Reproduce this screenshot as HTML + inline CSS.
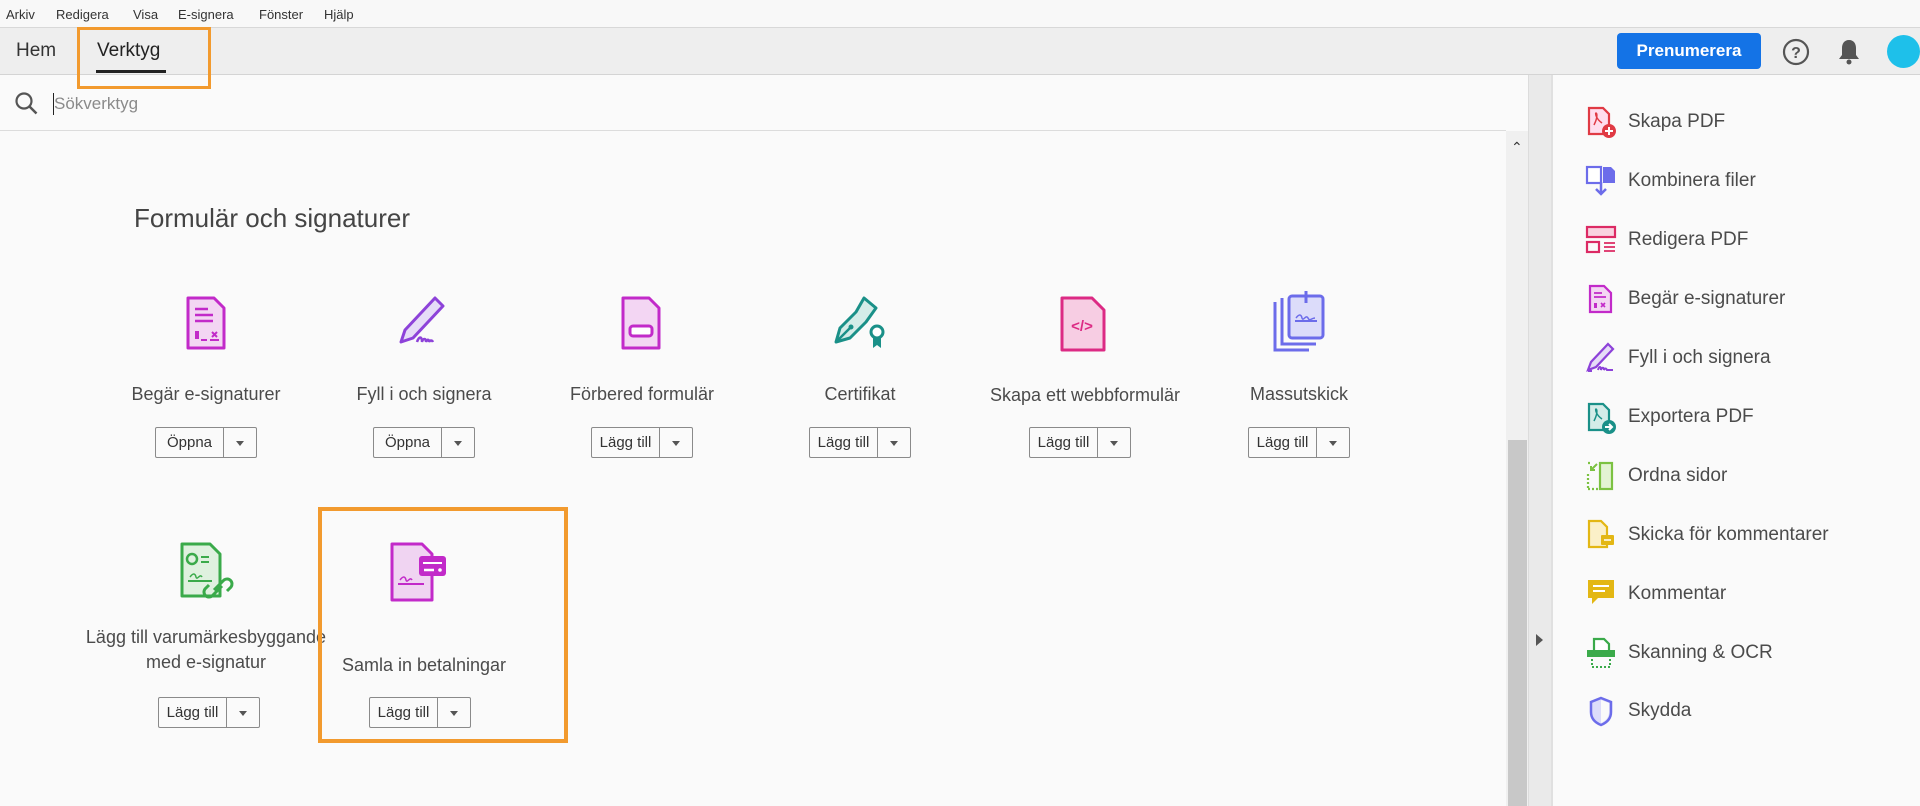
<!DOCTYPE html>
<html><head><meta charset="utf-8"><style>
*{margin:0;padding:0;box-sizing:border-box}
body{width:1920px;height:806px;overflow:hidden;background:#fafafa;font-family:"Liberation Sans",sans-serif;color:#4b4b4b;position:relative}
.abs{position:absolute}
.menu{left:0;top:0;width:1920px;height:28px;background:#f8f8f8;font-size:13px;color:#333;border-bottom:1px solid #d8d8d8}
.menu span{position:absolute;top:7px}
.tabs{left:0;top:28px;width:1920px;height:47px;background:#eeeeee;border-bottom:1px solid #d4d4d4}
.search{left:0;top:76px;width:1506px;height:55px;background:#fafafa;border-bottom:1px solid #dcdcdc}
.lbl{position:absolute;font-size:18px;text-align:center;width:300px;color:#4b4b4b}
.btn{position:absolute;height:31px;width:102px;border:1px solid #8a8a8a;border-radius:2px;background:#fafafa;font-size:15px;color:#333}
.btn .t{position:absolute;left:0;top:0;width:68px;height:29px;line-height:29px;text-align:center;border-right:1px solid #8a8a8a}
.btn .a{position:absolute;left:80px;top:13px;width:0;height:0;border-left:4px solid transparent;border-right:4px solid transparent;border-top:5px solid #555}
.ri{position:absolute;left:1628px;font-size:19px;color:#4b4b4b}
.ic{position:absolute}
</style></head><body>
<div class="abs menu"><span style="left:6px">Arkiv</span><span style="left:56px">Redigera</span><span style="left:133px">Visa</span><span style="left:178px">E-signera</span><span style="left:259px">Fönster</span><span style="left:324px">Hjälp</span></div>
<div class="abs tabs">
 <div class="abs" style="left:16px;top:12px;font-size:19px;color:#333">Hem</div>
 <div class="abs" style="left:97px;top:12px;font-size:19px;color:#222">Verktyg</div>
 <div class="abs" style="left:96px;top:42px;width:70px;height:3px;background:#222"></div>
 <div class="abs" style="left:1617px;top:5px;width:144px;height:36px;background:#1473e6;border-radius:4px;color:#fff;font-weight:bold;font-size:17px;text-align:center;line-height:36px">Prenumerera</div>
 <svg class="abs" style="left:1781px;top:9px" width="30" height="30"><circle cx="15" cy="15" r="12" fill="none" stroke="#555" stroke-width="2.2"/><text x="15" y="21" text-anchor="middle" font-family="Liberation Sans" font-weight="bold" font-size="16" fill="#555">?</text></svg>
 <svg class="abs" style="left:1836px;top:9px" width="26" height="30"><path d="M13 3c-5 0-7 4-7 8v7l-3 4h20l-3-4v-7c0-4-2-8-7-8z" fill="#555"/><circle cx="13" cy="25" r="2.5" fill="#555"/></svg>
 <div class="abs" style="left:1887px;top:7px;width:33px;height:33px;border-radius:50%;background:#1ec0ea"></div>
</div>
<div class="abs search">
 <svg class="abs" style="left:14px;top:15px" width="26" height="26"><circle cx="10" cy="10" r="7.5" fill="none" stroke="#555" stroke-width="2.2"/><path d="M15.5 15.5l7 7" stroke="#555" stroke-width="2.5"/></svg>
 <div class="abs" style="left:53px;top:17px;width:1px;height:22px;background:#222"></div>
 <div class="abs" style="left:54px;top:18px;font-size:17px;color:#8a8a8a">Sökverktyg</div>
</div>
<div class="abs" style="left:77px;top:27px;width:134px;height:62px;border:3px solid #f29a2e;z-index:5"></div>
<!-- scrollbar and divider -->
<div class="abs" style="left:1506px;top:131px;width:22px;height:675px;background:#f0f0f0"></div>
<div class="abs" style="left:1508px;top:440px;width:19px;height:366px;background:#c8c8c8"></div>
<div class="abs" style="left:1511px;top:139px;font-size:14px;color:#333">&#8963;</div>
<div class="abs" style="left:1506px;top:76px;width:22px;height:55px;background:#fafafa"></div>
<div class="abs" style="left:1528px;top:75px;width:25px;height:731px;background:#eaeaea;border-left:1px solid #dcdcdc;border-right:2px solid #e0e0e0"></div>
<div class="abs" style="left:1536px;top:634px;width:0;height:0;border-top:6px solid transparent;border-bottom:6px solid transparent;border-left:7px solid #555"></div>
<div class="abs" style="left:1555px;top:75px;width:365px;height:731px;background:#fafafa"></div>

<div class="abs" style="left:134px;top:203px;font-size:26px;color:#444">Formulär och signaturer</div>

<!-- Row1 icons -->
<svg class="ic" style="left:184px;top:294px" width="46" height="60"><path d="M4 4h26l10 10v40H4z" fill="#f3d6f3" stroke="#c22ac9" stroke-width="3" stroke-linejoin="round"/><path d="M11 15h13M11 21h18M11 27h18" stroke="#c22ac9" stroke-width="2.5"/><path d="M11 37h4v8h-4z" fill="#c22ac9"/><path d="M17 46h6M26 46h9M28 38l5 5M33 38l-5 5" stroke="#c22ac9" stroke-width="2"/></svg>
<svg class="ic" style="left:395px;top:294px" width="60" height="60"><path d="M40 4l8 8-30 32-12 4 4-12z" fill="#e6dcf7" stroke="#8d42d9" stroke-width="3" stroke-linejoin="round"/><path d="M22 48c2-6 5-6 5 0c1-4 4-4 4 0c1-3 3-3 3 0 1-2 3-2 4 0" fill="none" stroke="#8d42d9" stroke-width="2.5"/></svg>
<svg class="ic" style="left:619px;top:294px" width="46" height="60"><path d="M4 4h26l10 10v40H4z" fill="#f3d6f3" stroke="#c22ac9" stroke-width="3" stroke-linejoin="round"/><rect x="11" y="32" width="22" height="10" rx="3" fill="#fff" stroke="#c22ac9" stroke-width="3"/></svg>
<svg class="ic" style="left:830px;top:292px" width="62" height="62"><path d="M34 6l12 10-10 14-16 16-14 4 4-14 16-16z" fill="#d4ece8" stroke="#1a9088" stroke-width="3" stroke-linejoin="round"/><path d="M8 48l12-12" stroke="#1a9088" stroke-width="2.5"/><circle cx="21" cy="35" r="2.5" fill="#1a9088"/><circle cx="47" cy="40" r="6" fill="#fff" stroke="#1a9088" stroke-width="3"/><path d="M43 46v10l4-3 4 3V46" fill="#1a9088"/></svg>
<svg class="ic" style="left:1058px;top:294px" width="52" height="60"><path d="M4 4h30l12 12v40H4z" fill="#f7cde3" stroke="#dc2a84" stroke-width="3" stroke-linejoin="round"/><text x="24" y="37" text-anchor="middle" font-family="Liberation Sans" font-weight="bold" font-size="15" fill="#dc2a84">&lt;/&gt;</text></svg>
<svg class="ic" style="left:1272px;top:288px" width="56" height="68"><path d="M3 14v48h34" fill="none" stroke="#6c6cea" stroke-width="3"/><path d="M10 10v46h34" fill="none" stroke="#6c6cea" stroke-width="3"/><rect x="17" y="8" width="34" height="42" rx="3" fill="#dcdcfa" stroke="#6c6cea" stroke-width="3"/><path d="M34 3v12" stroke="#6c6cea" stroke-width="3"/><path d="M23 33h22" stroke="#6c6cea" stroke-width="2"/><path d="M24 30c3-4 5-4 6 0s4-4 6 0 3 0 7 0" fill="none" stroke="#6c6cea" stroke-width="1.5"/></svg>

<div class="lbl" style="left:56px;top:384px">Begär e-signaturer</div>
<div class="lbl" style="left:274px;top:384px">Fyll i och signera</div>
<div class="lbl" style="left:492px;top:384px">Förbered formulär</div>
<div class="lbl" style="left:710px;top:384px">Certifikat</div>
<div class="lbl" style="left:935px;top:385px">Skapa ett webbformulär</div>
<div class="lbl" style="left:1149px;top:384px">Massutskick</div>

<div class="btn" style="left:155px;top:427px"><div class="t">Öppna</div><div class="a"></div></div>
<div class="btn" style="left:373px;top:427px"><div class="t">Öppna</div><div class="a"></div></div>
<div class="btn" style="left:591px;top:427px"><div class="t">Lägg till</div><div class="a"></div></div>
<div class="btn" style="left:809px;top:427px"><div class="t">Lägg till</div><div class="a"></div></div>
<div class="btn" style="left:1029px;top:427px"><div class="t">Lägg till</div><div class="a"></div></div>
<div class="btn" style="left:1248px;top:427px"><div class="t">Lägg till</div><div class="a"></div></div>

<!-- Row2 -->
<svg class="ic" style="left:178px;top:540px" width="62" height="68"><path d="M4 4h28l10 10v42H4z" fill="#dff1df" stroke="#3aaa4a" stroke-width="3" stroke-linejoin="round"/><circle cx="14" cy="19" r="5" fill="none" stroke="#3aaa4a" stroke-width="2.5"/><path d="M23 17h8M23 22h8M10 41h24" stroke="#3aaa4a" stroke-width="2"/><path d="M12 37c3-4 5-4 6 0s4-4 6 0" fill="none" stroke="#3aaa4a" stroke-width="1.5"/><path d="M36 50l10-10a5 5 0 0 1 7 7l-4 4M44 46l-10 10a5 5 0 0 1-7-7l4-4" fill="none" stroke="#3aaa4a" stroke-width="3"/></svg>
<svg class="ic" style="left:388px;top:540px" width="64" height="64"><path d="M4 4h30l10 10v46H4z" fill="#f0d4f2" stroke="#c22ac9" stroke-width="3" stroke-linejoin="round"/><rect x="31" y="16" width="27" height="20" rx="3" fill="#c22ac9"/><path d="M35 23h19" stroke="#fff" stroke-width="2"/><path d="M36 30h10" stroke="#fff" stroke-width="2.5"/><circle cx="52" cy="30" r="1.8" fill="#fff"/><path d="M10 44h26" stroke="#c22ac9" stroke-width="2"/><path d="M12 40c3-4 5-4 6 0s4-4 6 0" fill="none" stroke="#c22ac9" stroke-width="1.5"/></svg>

<div class="lbl" style="left:56px;top:625px;line-height:25px">Lägg till varumärkesbyggande<br>med e-signatur</div>
<div class="lbl" style="left:274px;top:655px">Samla in betalningar</div>
<div class="btn" style="left:158px;top:697px"><div class="t">Lägg till</div><div class="a"></div></div>
<div class="btn" style="left:369px;top:697px"><div class="t">Lägg till</div><div class="a"></div></div>
<div class="abs" style="left:318px;top:507px;width:250px;height:236px;border:4px solid #f29a2e"></div>

<!-- Right panel -->
<svg class="ic" style="left:1586px;top:105px" width="32" height="34"><path d="M3 3h14l6 6v20H3z" fill="#fde" stroke="#e03a44" stroke-width="2.2"/><path d="M8 20c4-8 3-12 2-12s0 6 6 10" fill="none" stroke="#e03a44" stroke-width="1.5"/><circle cx="23" cy="26" r="7" fill="#e03a44"/><path d="M23 22v8M19 26h8" stroke="#fff" stroke-width="2"/></svg>
<div class="ri" style="top:111px">Skapa PDF</div>
<svg class="ic" style="left:1584px;top:164px" width="34" height="34"><rect x="3" y="3" width="14" height="16" fill="#fff" stroke="#6c6cea" stroke-width="2.2"/><path d="M19 3h8l4 4v12H19z" fill="#6c6cea"/><path d="M17 18v12M12 25l5 5 5-5" stroke="#6c6cea" stroke-width="2.5" fill="none"/></svg>
<div class="ri" style="top:170px">Kombinera filer</div>
<svg class="ic" style="left:1584px;top:224px" width="34" height="32"><rect x="3" y="3" width="28" height="10" fill="#f9d2e0" stroke="#dc2a64" stroke-width="2.2"/><rect x="3" y="18" width="12" height="10" fill="none" stroke="#dc2a64" stroke-width="2.2"/><path d="M20 19h11M20 23h11M20 27h11" stroke="#dc2a64" stroke-width="1.8"/></svg>
<div class="ri" style="top:229px">Redigera PDF</div>
<svg class="ic" style="left:1587px;top:283px" width="28" height="32"><path d="M3 3h14l7 7v19H3z" fill="#f3d6f3" stroke="#c22ac9" stroke-width="2.2"/><path d="M7 10h8M7 14h12" stroke="#c22ac9" stroke-width="1.8"/><rect x="7" y="20" width="3" height="5" fill="#c22ac9"/><path d="M14 20l4 4M18 20l-4 4" stroke="#c22ac9" stroke-width="1.6"/></svg>
<div class="ri" style="top:288px">Begär e-signaturer</div>
<svg class="ic" style="left:1584px;top:341px" width="34" height="34"><path d="M24 3l5 5-17 18-8 3 3-8z" fill="#e6dcf7" stroke="#8d42d9" stroke-width="2.2"/><path d="M4 30h4M14 29c1-4 3-4 3 0 1-3 3-3 3 0 1-2 2-2 3 0 1 0 4 0 6 0" fill="none" stroke="#8d42d9" stroke-width="2"/></svg>
<div class="ri" style="top:347px">Fyll i och signera</div>
<svg class="ic" style="left:1586px;top:401px" width="32" height="34"><path d="M3 3h14l6 6v20H3z" fill="#d4ece8" stroke="#1a9088" stroke-width="2.2"/><path d="M8 20c4-8 3-12 2-12s0 6 6 10" fill="none" stroke="#1a9088" stroke-width="1.5"/><circle cx="23" cy="26" r="7" fill="#1a9088"/><path d="M19 26h7M23 23l3 3-3 3" stroke="#fff" stroke-width="2" fill="none"/></svg>
<div class="ri" style="top:406px">Exportera PDF</div>
<svg class="ic" style="left:1585px;top:460px" width="32" height="32"><rect x="15" y="3" width="12" height="26" fill="#e3f3d3" stroke="#7cc242" stroke-width="2.2"/><path d="M3 29h10M3 14v15M3 3h4" stroke="#7cc242" stroke-width="2.2" stroke-dasharray="2 2"/><path d="M12 4l-6 6M6 6v4h4" stroke="#7cc242" stroke-width="2" fill="none"/></svg>
<div class="ri" style="top:465px">Ordna sidor</div>
<svg class="ic" style="left:1586px;top:518px" width="32" height="34"><path d="M3 3h12l6 6v20H3z" fill="#fbf0c8" stroke="#e3b714" stroke-width="2.2"/><rect x="15" y="17" width="13" height="10" rx="1" fill="#e3b714"/><path d="M18 22h7" stroke="#fff" stroke-width="1.5"/></svg>
<div class="ri" style="top:524px">Skicka för kommentarer</div>
<svg class="ic" style="left:1586px;top:578px" width="30" height="32"><path d="M2 2h26v18H12l-6 6v-6H2z" fill="#e3b714"/><path d="M7 8h16M7 13h12" stroke="#fff" stroke-width="2"/></svg>
<div class="ri" style="top:583px">Kommentar</div>
<svg class="ic" style="left:1585px;top:636px" width="32" height="34"><path d="M9 3h10l5 5v8H9z" fill="#fff" stroke="#3aaa4a" stroke-width="2.2"/><rect x="2" y="14" width="28" height="7" fill="#3aaa4a"/><path d="M7 23v8h18v-8" stroke="#3aaa4a" stroke-width="2" stroke-dasharray="2 2" fill="none"/></svg>
<div class="ri" style="top:642px">Skanning &amp; OCR</div>
<svg class="ic" style="left:1587px;top:695px" width="28" height="34"><path d="M14 3l10 4v10c0 7-5 11-10 13-5-2-10-6-10-13V7z" fill="#dcdcfa" stroke="#6c6cea" stroke-width="2.5"/><path d="M14 5l8 3v9c0 6-4 9-8 11z" fill="#fafafa"/></svg>
<div class="ri" style="top:700px">Skydda</div>
</body></html>
